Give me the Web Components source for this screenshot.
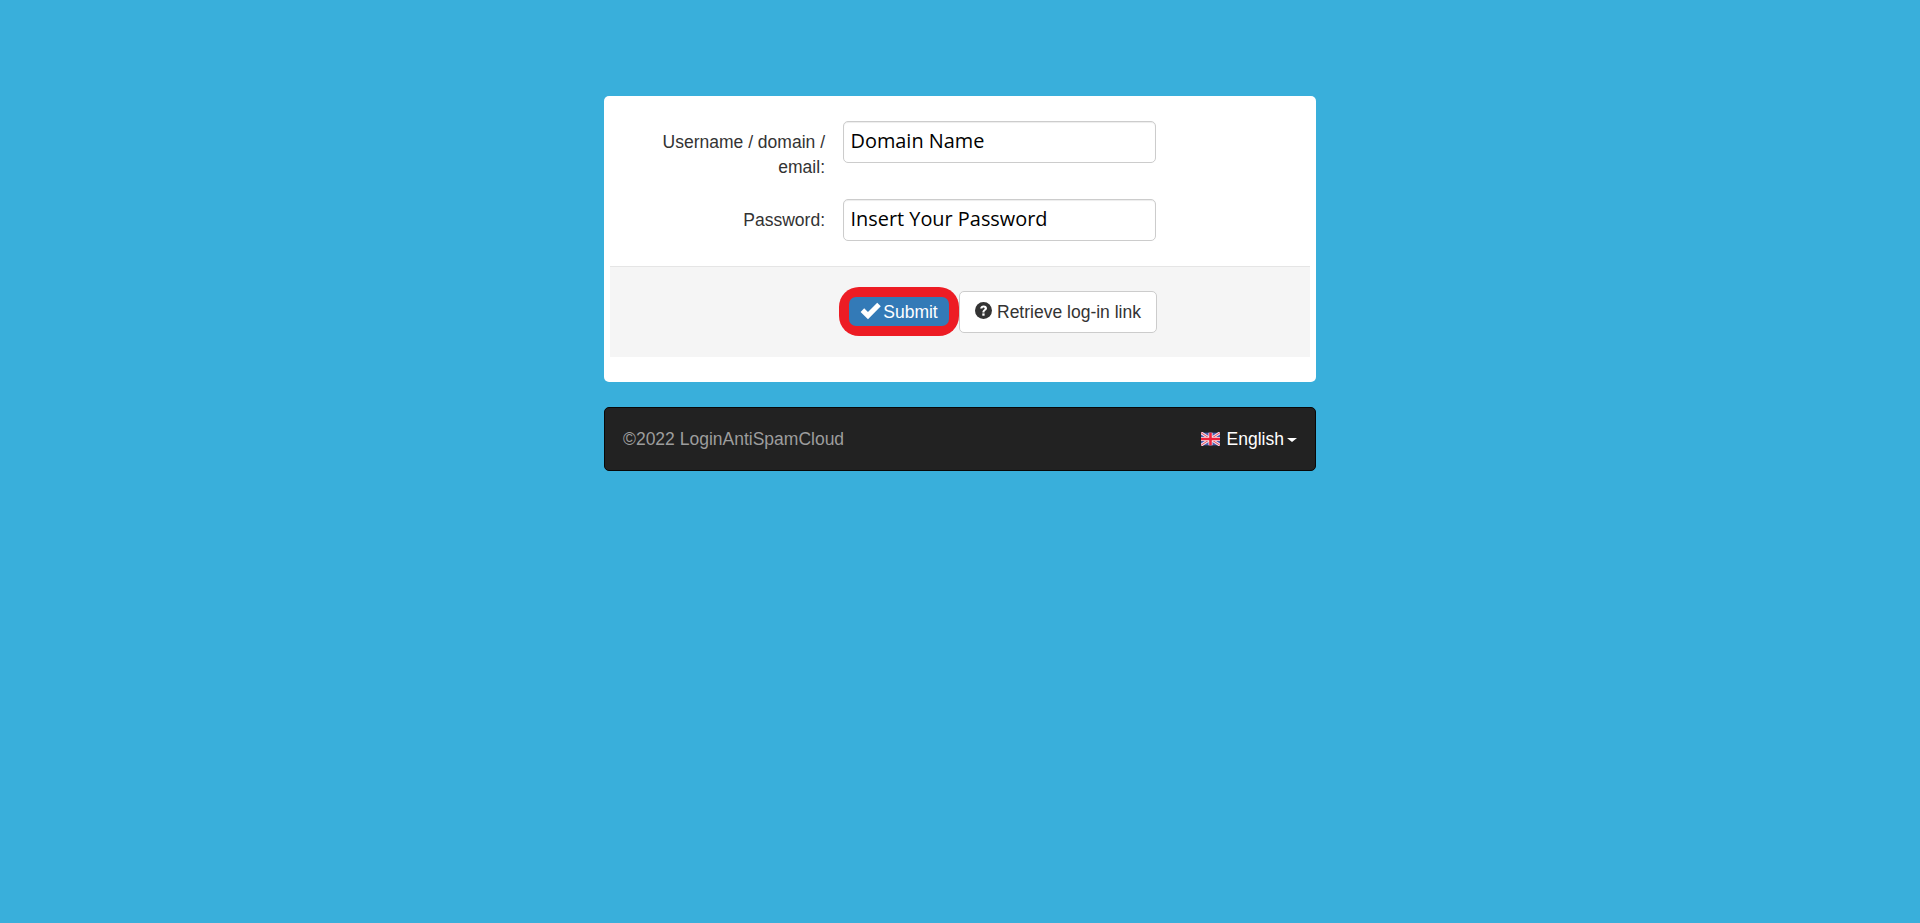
<!DOCTYPE html>
<html lang="en">
<head>
<meta charset="utf-8">
<title>Login</title>
<style>
html,body{margin:0;padding:0;height:100%;background:#39afdb;}
body{font-family:"Liberation Sans",Arial,sans-serif;font-size:17.5px;line-height:24.5px;color:#333;}
</style>
</head>
<body>
<login-page>
  <login-panel>
    <form-row label="Username / domain / email:"><text-field>Domain Name</text-field></form-row>
    <form-row label="Password:"><text-field>Insert Your Password</text-field></form-row>
    <action-bar slot="actions">
      <submit-button>Submit</submit-button>
      <help-button>Retrieve log-in link</help-button>
    </action-bar>
  </login-panel>
  <footer-bar>
    <span>©2022 LoginAntiSpamCloud</span>
    <lang-select slot="end">English</lang-select>
  </footer-bar>
</login-page>
<script>
function el(name, css, html, observed){
  customElements.define(name, class extends HTMLElement{
    constructor(){super();const r=this.attachShadow({mode:'open'});r.innerHTML='<style>'+css+'</style>'+html;}
    connectedCallback(){ if(observed) observed(this); }
  });
}
el('login-page',
 ':host{display:flex;flex-direction:column;align-items:center;padding-top:96px;gap:25px}',
 '<slot></slot>');
el('login-panel',
 ':host{display:block;box-sizing:border-box;width:712px;padding:25px 6px 25px;background:#fff;border-radius:5px}'+
 '.rows{display:flex;flex-direction:column;gap:20px;padding-bottom:25px}',
 '<div class="rows"><slot></slot></div><slot name="actions"></slot>');
el('form-row',
 ':host{display:grid;grid-template-columns:215px 313px;column-gap:18px;align-items:start}'+
 'label{display:block;text-align:right;padding:9px 0 0 20px}',
 '<label></label><div><slot></slot></div>',
 h=>{h.shadowRoot.querySelector('label').textContent=h.getAttribute('label');});
el('text-field',
 ':host{display:flex;align-items:center;box-sizing:border-box;height:42px;padding:0 6.5px 2.5px;background:#fff;border:1px solid #ccc;border-radius:5px;'+
 'box-shadow:inset 0 1px 1px rgba(0,0,0,.075);font-family:"Open Sans","Noto Sans",sans-serif;font-size:19.9px;color:#000}',
 '<slot></slot>');
el('action-bar',
 ':host{display:flex;align-items:center;box-sizing:border-box;height:91px;padding:0 0 1px 229px;background:#f5f5f5;border-top:1px solid #e5e5e5}',
 '<slot></slot>');
el('submit-button',
 ':host{display:block;box-sizing:border-box;width:120px;height:49px;padding:10px;background:#ed1c24;border-radius:20px;flex:none}'+
 'div{display:flex;align-items:center;justify-content:center;box-sizing:border-box;gap:2px;height:29px;padding-top:2px;background:#337ab7;border-radius:7px;color:#fff}'+
 'svg{width:21px;height:18px;fill:#fff;flex:none;margin-top:-4px}',
 '<div><svg viewBox="0 0 20 17"><path d="M.6 9.4 4 5.8 7.6 9.4 16.4 .6 19.8 4 7.6 16.4 Z"/></svg><slot></slot></div>');
el('help-button',
 ':host{display:flex;align-items:center;box-sizing:border-box;width:198px;height:42px;padding:2px 0 0 15px;gap:5px;background:#fff;border:1px solid #ccc;border-radius:5px;color:#333;flex:none}'+
 'svg{width:17px;height:17px;flex:none;margin-top:-5px}',
 '<svg viewBox="0 0 17 17"><circle cx="8.5" cy="8.5" r="8.5" fill="#333"/><path d="M5.2 6.6C5.3 4.6 6.7 3.4 8.7 3.4 10.7 3.4 12 4.6 12 6.2 12 7.5 11.2 8.2 10.3 8.8 9.6 9.3 9.5 9.6 9.5 10.5H7.4C7.4 9.1 7.8 8.4 8.7 7.7 9.4 7.2 9.7 6.9 9.7 6.3 9.7 5.7 9.3 5.4 8.6 5.4 7.9 5.4 7.5 5.9 7.4 6.6Z" fill="#fff"/><rect x="7.3" y="11.4" width="2.3" height="2.3" fill="#fff"/></svg><slot></slot>');
el('footer-bar',
 ':host{display:flex;align-items:center;justify-content:space-between;box-sizing:border-box;width:712px;height:64px;padding:0 18px;background:#222;border:1px solid #080808;border-radius:5px;color:#9d9d9d}',
 '<slot></slot><slot name="end"></slot>');
el('lang-select',
 ':host{display:flex;align-items:center;color:#fff}'+
 'svg{width:19px;height:14px;margin-right:7px;flex:none;filter:blur(.7px)}'+
 'i{display:inline-block;margin-left:3px;border-top:4.5px solid #fff;border-left:5px solid transparent;border-right:5px solid transparent;margin-top:2px}',
 '<svg viewBox="0 0 60 40"><rect width="60" height="40" fill="#4a5cb0"/><path d="M0 0 60 40M60 0 0 40" stroke="#f6dfe6" stroke-width="9"/><path d="M0 0 60 40M60 0 0 40" stroke="#e8455a" stroke-width="3"/><path d="M30 0V40M0 20H60" stroke="#f6e6ea" stroke-width="13"/><path d="M30 0V40M0 20H60" stroke="#f0203a" stroke-width="8"/></svg><slot></slot><i></i>');
</script>
</body>
</html>
